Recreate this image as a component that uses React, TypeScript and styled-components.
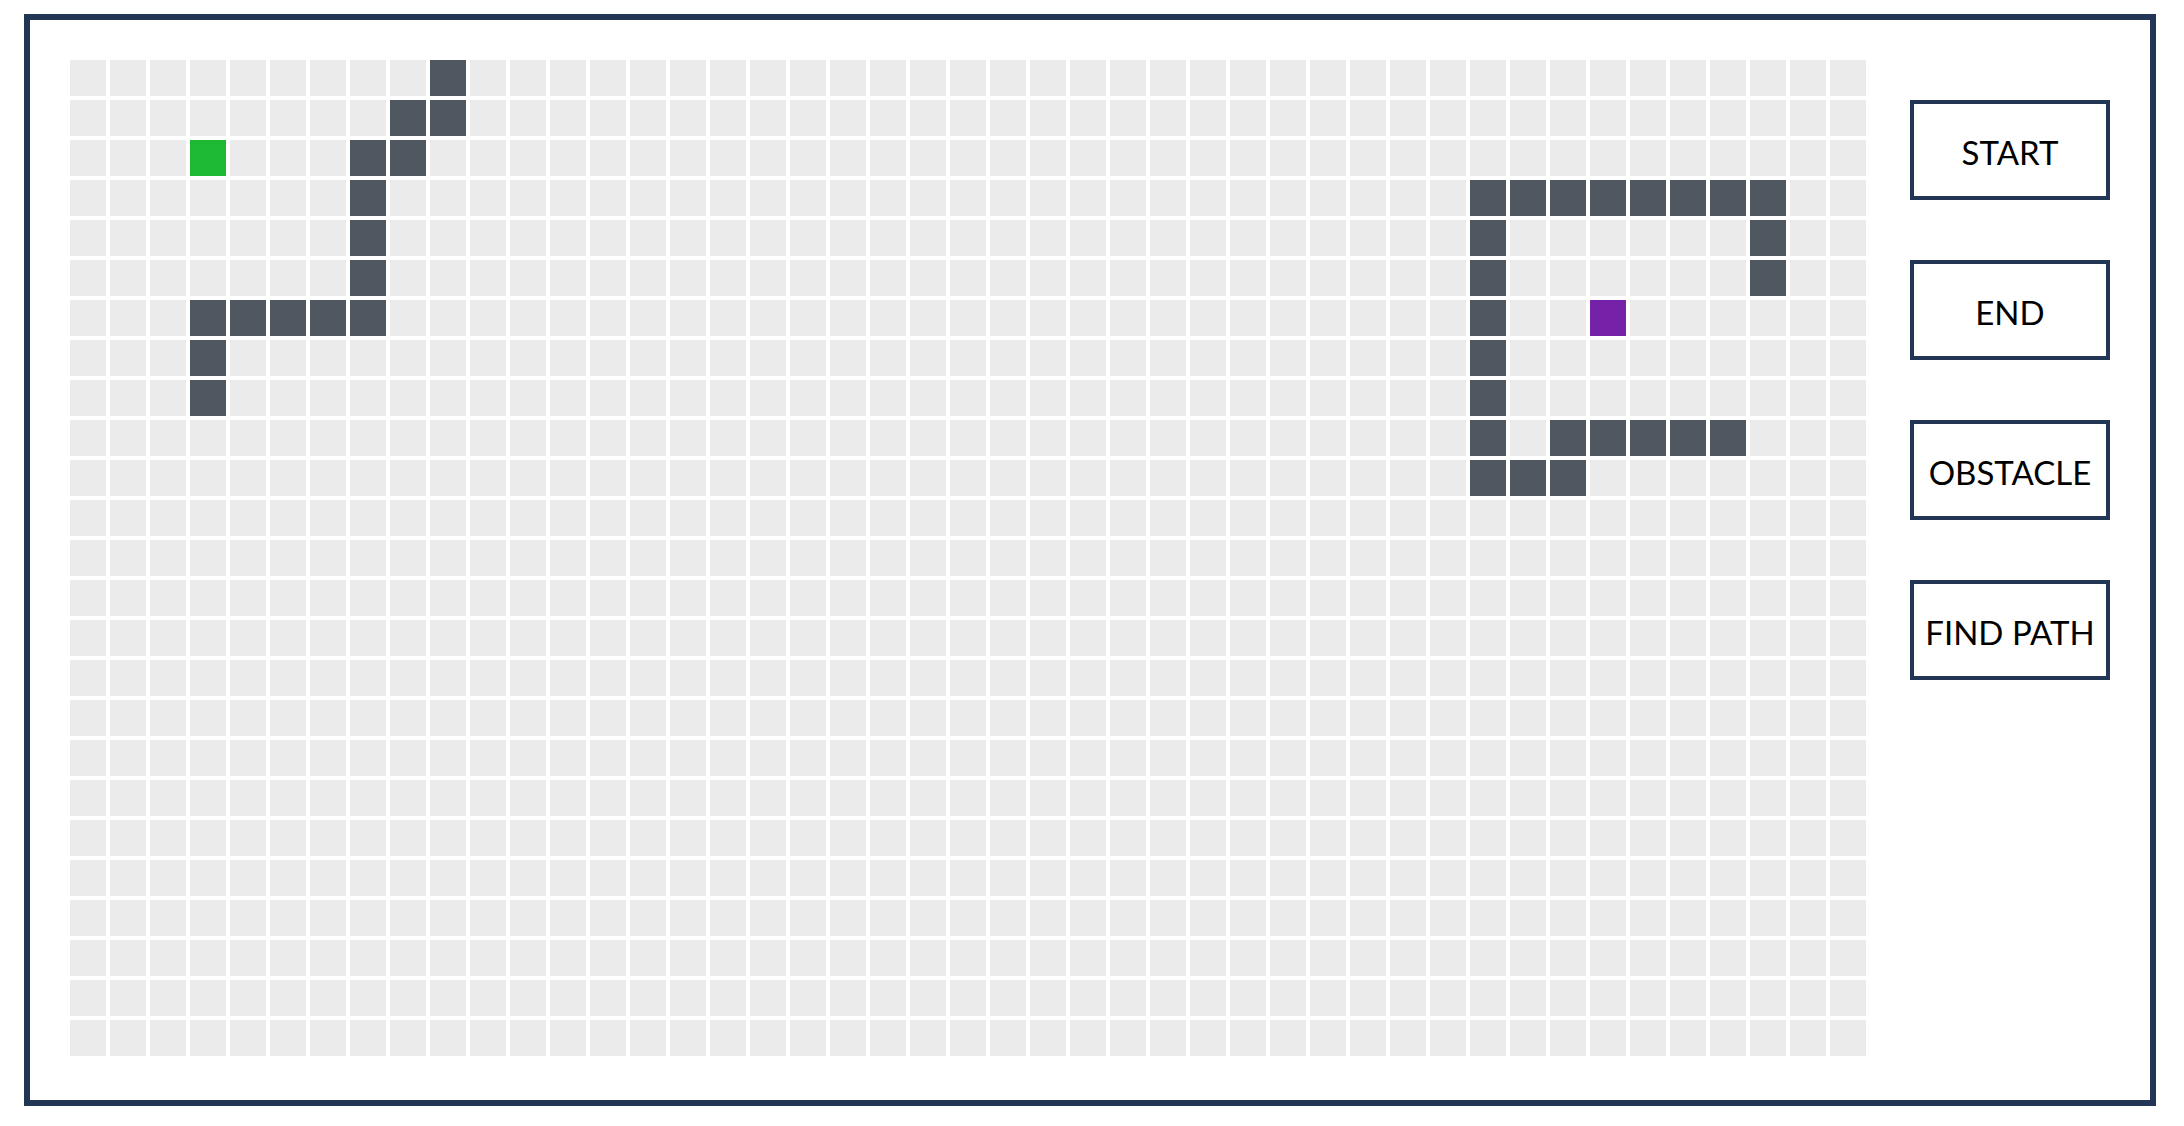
import styled, {createGlobalStyle} from 'styled-components'

const ROWS = 25
const COLS = 45

const START = '2,3'
const END = '6,38'

const WALLS = new Set<string>([
  '0,9',
  '1,8', '1,9',
  '2,7', '2,8',
  '3,7', '4,7', '5,7',
  '6,3', '6,4', '6,5', '6,6', '6,7',
  '7,3', '8,3',
  '3,35', '3,36', '3,37', '3,38', '3,39', '3,40', '3,41', '3,42',
  '4,35', '4,42',
  '5,35', '5,42',
  '6,35', '7,35', '8,35',
  '9,35', '9,37', '9,38', '9,39', '9,40', '9,41',
  '10,35', '10,36', '10,37',
])

type Kind = 'empty' | 'wall' | 'start' | 'end'

const cellColor: Record<Kind, string> = {
  empty: '#ebebeb',
  wall: '#4f5760',
  start: '#1db834',
  end: '#7522a8',
}

const Global = createGlobalStyle`
  body {
    margin: 0;
    background: #ffffff;
    font-family: Lato, "Liberation Sans", sans-serif;
  }
`

const Frame = styled.main`
  box-sizing: border-box;
  width: 2132px;
  height: 1092px;
  margin: 14px 0 0 24px;
  border: 6px solid #233554;
  padding: 40px 40px 0 40px;
  display: flex;
  align-items: flex-start;
`

const Board = styled.div`
  display: grid;
  grid-template-columns: repeat(${COLS}, 36px);
  grid-auto-rows: 36px;
  gap: 4px;
`

const Cell = styled.div<{$kind: Kind}>`
  background: ${p => cellColor[p.$kind]};
`

const Controls = styled.div`
  margin-left: 44px;
  padding-top: 40px;
  display: flex;
  flex-direction: column;
  gap: 60px;
`

const Button = styled.button`
  box-sizing: border-box;
  width: 200px;
  height: 100px;
  border: 4px solid #233554;
  background: #ffffff;
  padding: 4px 0 0 0;
  font-family: Lato, "Liberation Sans", sans-serif;
  font-size: 33px;
  color: #000000;
  text-align: center;
  white-space: nowrap;
  cursor: pointer;
`

const kindOf = (r: number, c: number): Kind => {
  const key = `${r},${c}`
  if (key === START) return 'start'
  if (key === END) return 'end'
  if (WALLS.has(key)) return 'wall'
  return 'empty'
}

export default function App() {
  return (
    <>
      <Global />
      <Frame>
        <Board>
          {Array.from({length: ROWS * COLS}, (_, i) => (
            <Cell key={i} $kind={kindOf(Math.floor(i / COLS), i % COLS)} />
          ))}
        </Board>
        <Controls>
          <Button>START</Button>
          <Button>END</Button>
          <Button>OBSTACLE</Button>
          <Button>FIND PATH</Button>
        </Controls>
      </Frame>
    </>
  )
}
